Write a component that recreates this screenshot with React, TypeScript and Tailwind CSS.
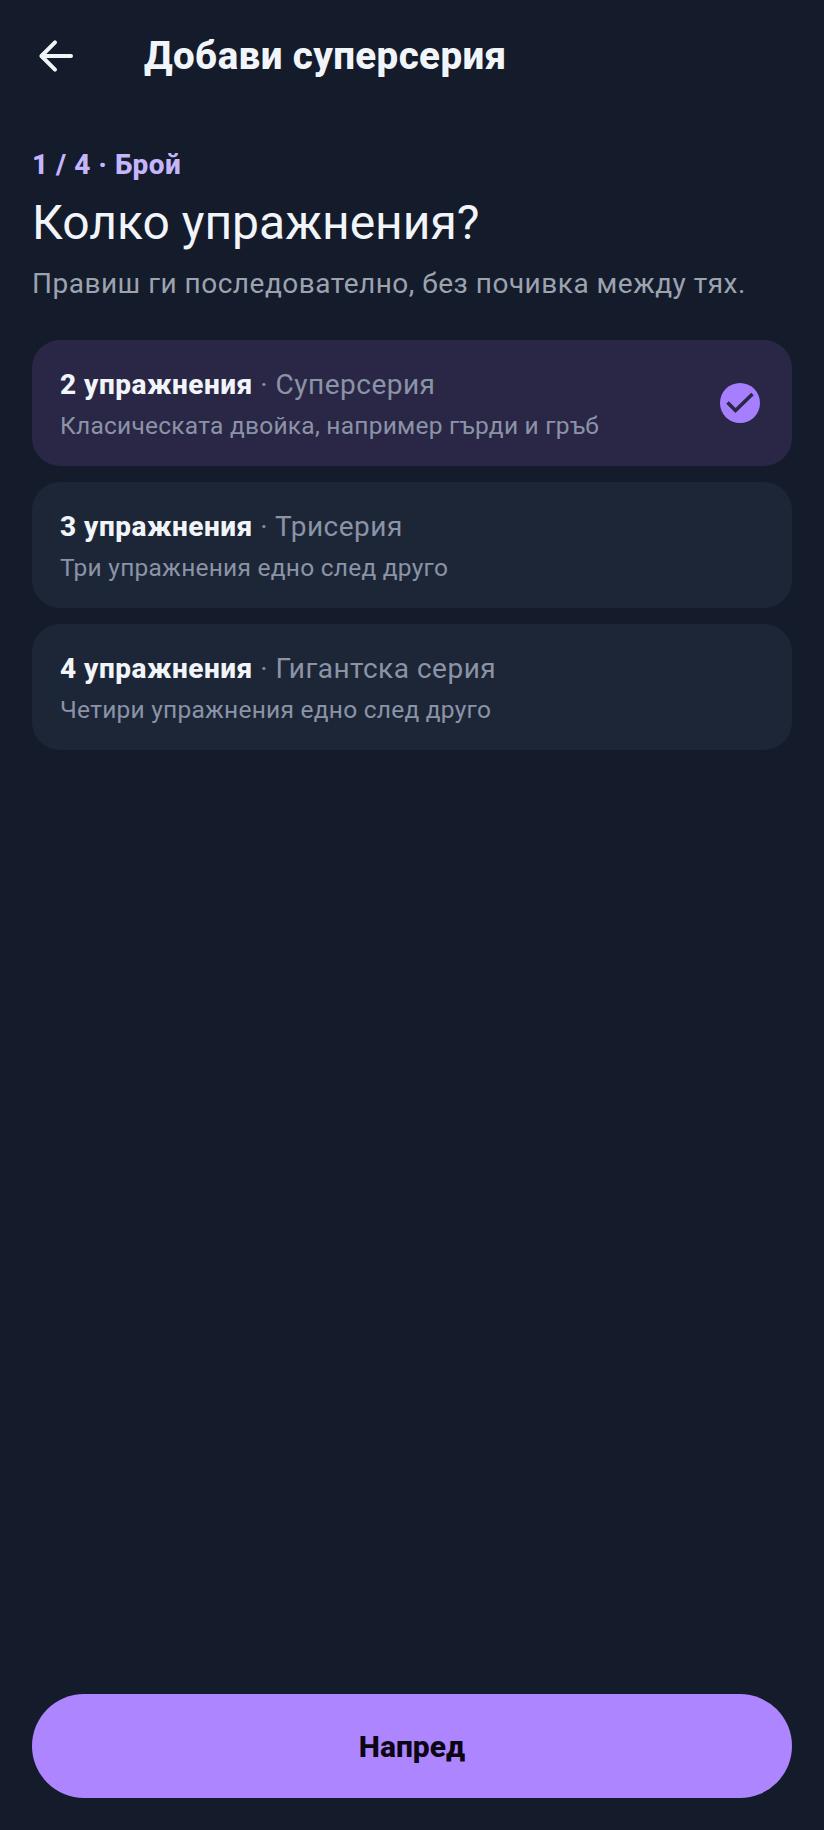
import React, { useState } from 'react';

const options = [
  { count: '2 упражнения', name: 'Суперсерия', hint: 'Класическата двойка, например гърди и гръб' },
  { count: '3 упражнения', name: 'Трисерия', hint: 'Три упражнения едно след друго' },
  { count: '4 упражнения', name: 'Гигантска серия', hint: 'Четири упражнения едно след друго' },
];

function BackIcon() {
  return (
    <svg width="48" height="48" viewBox="0 0 24 24" fill="none" stroke="#f1f5f9" strokeWidth="2" strokeLinecap="round" strokeLinejoin="round">
      <path d="M19.5 12H5M11.5 5.2 4.7 12l6.8 6.8" />
    </svg>
  );
}

function CheckBadge() {
  return (
    <svg width="40" height="40" viewBox="0 0 40 40" className="shrink-0 -mt-[3px]">
      <circle cx="20" cy="20" r="20" fill="#a67fff" />
      <path d="M7.5 19.5 15.5 27.5 32.5 11" fill="none" stroke="#2a2746" strokeWidth="3.6" />
    </svg>
  );
}

export default function App() {
  const [selected, setSelected] = useState(0);

  return (
    <div className="min-h-[1830px] h-[1830px] bg-[#141b2a] flex flex-col font-['Roboto',sans-serif]">
      <div className="flex items-center h-[48px] mt-[32px] pl-[32px]">
        <BackIcon />
        <h1 className="ml-[64px] text-[38.5px] tracking-[0.4px] leading-[48px] font-extrabold text-[#f1f5f9]">Добави суперсерия</h1>
      </div>

      <div className="flex-1 px-[32px] pt-[67px]">
        <p className="text-[28px] tracking-[0.5px] leading-[36px] font-extrabold text-[#c4b5fd]">1 / 4 · Брой</p>
        <h2 className="mt-[10px] text-[48px] leading-[60px] text-[#f1f5f9]">Колко упражнения?</h2>
        <p className="mt-[11px] text-[28px] tracking-[0.5px] leading-[40px] text-[#9ca3af]">Правиш ги последователно, без почивка между тях.</p>

        <div className="mt-[36px] flex flex-col gap-[16px]">
          {options.map((o, i) => (
            <button
              key={o.count}
              onClick={() => setSelected(i)}
              className={`h-[126px] rounded-[28px] pt-[3px] pl-[28px] pr-[32px] flex items-center justify-between text-left ${
                selected === i ? 'bg-[#2a2746]' : 'bg-[#1d2637]'
              }`}
            >
              <div>
                <div className="text-[28px] tracking-[0.5px] leading-[40px] text-[#8b93a7]">
                  <span className="font-extrabold text-[#f1f5f9]">{o.count}</span> · {o.name}
                </div>
                <div className="mt-[3px] text-[24.5px] tracking-[0.25px] leading-[36px] text-[#8b93a7]">{o.hint}</div>
              </div>
              {selected === i && <CheckBadge />}
            </button>
          ))}
        </div>
      </div>

      <div className="px-[32px] pb-[32px]">
        <button className="w-full h-[104px] rounded-[52px] bg-[#ad85ff] text-[30px] font-extrabold text-[#0a0612]">Напред</button>
      </div>
    </div>
  );
}
